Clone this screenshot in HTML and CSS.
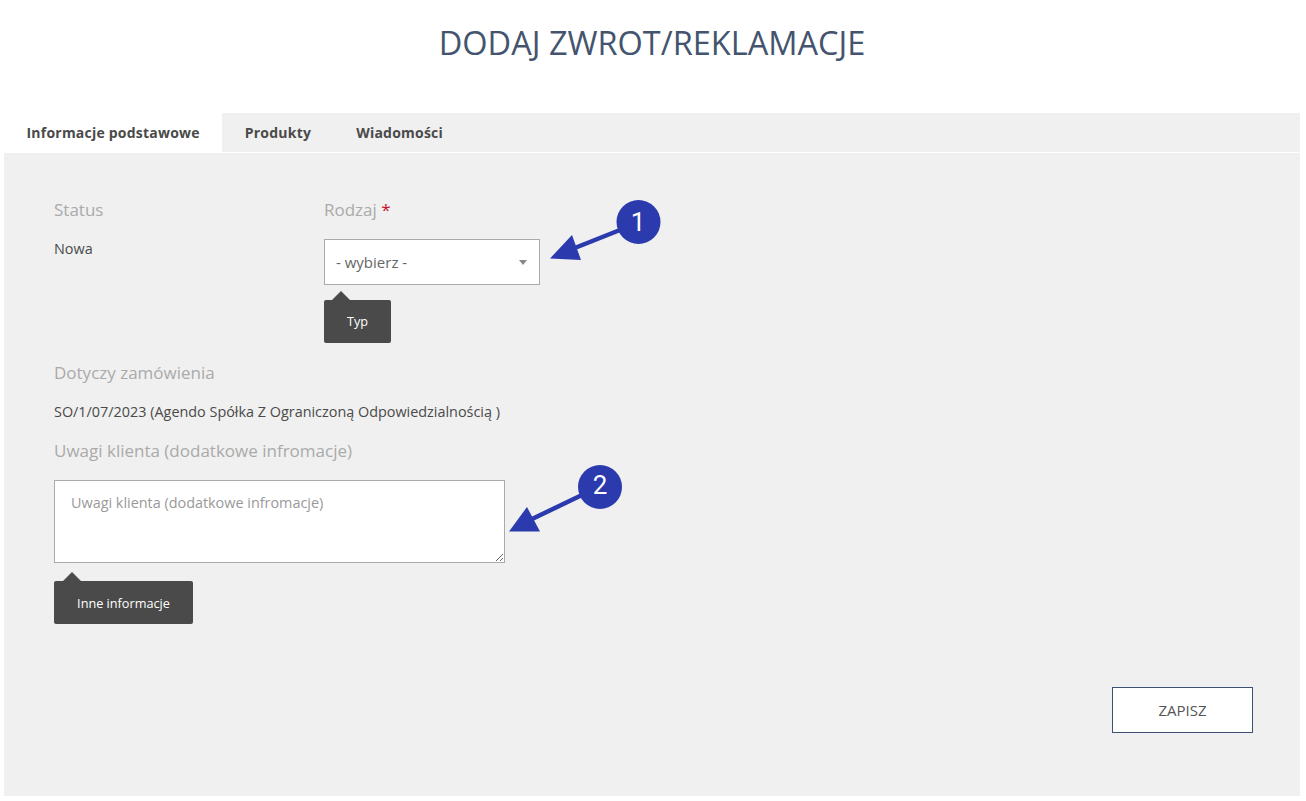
FILE: index.html
```html
<!DOCTYPE html>
<html lang="pl">
<head>
<meta charset="utf-8">
<title>Dodaj zwrot/reklamacje</title>
<link rel="stylesheet" href="styles.css">
</head>
<body>
<div class="page">
  <h1 class="title">DODAJ ZWROT/REKLAMACJE</h1>
  <div class="tabs">
    <a class="tab tab-active">Informacje podstawowe</a>
    <a class="tab">Produkty</a>
    <a class="tab">Wiadomości</a>
  </div>
  <div class="panel">
    <div class="row-top">
      <div class="col-status">
        <div class="label">Status</div>
        <div class="value value-status">Nowa</div>
      </div>
      <div class="col-type">
        <div class="label">Rodzaj <span class="req">*</span></div>
        <div class="select-wrap">
          <select class="select"><option>- wybierz -</option></select>
          <span class="caret"></span>
        </div>
        <div class="tip tip-type">Typ</div>
      </div>
    </div>
    <div class="label label-order">Dotyczy zamówienia</div>
    <div class="value value-order">SO/1/07/2023 (Agendo Spółka Z Ograniczoną Odpowiedzialnością )</div>
    <div class="label label-notes">Uwagi klienta (dodatkowe infromacje)</div>
    <textarea class="notes" placeholder="Uwagi klienta (dodatkowe infromacje)"></textarea>
    <div class="tip tip-notes">Inne informacje</div>
    <div class="actions"><button class="save">ZAPISZ</button></div>
  </div>
  <svg class="overlay" width="1306" height="801" viewBox="0 0 1306 801" aria-hidden="true">
    <g fill="#2b3bae">
      <path d="M576 247.500L620 230" stroke="#2b3bae" stroke-width="4.500"/>
      <path d="M550 258.500L572 235L581 260Z"/>
      <circle cx="638.500" cy="222" r="22"/>
      <path d="M530 520L582 495" stroke="#2b3bae" stroke-width="4.500"/>
      <path d="M509 531.500L527 507L540 531.500Z"/>
      <circle cx="600" cy="487" r="22"/>
    </g>
    <g fill="#fff" font-family="Roboto, sans-serif" font-size="26" font-weight="400" text-anchor="middle">
      <text x="638" y="231">1</text>
      <text x="600" y="494">2</text>
    </g>
  </svg>
</div>
</body>
</html>
```
FILE: styles.css
```css
* { box-sizing: border-box; }
html, body { margin: 0; padding: 0; background: #fff; }
body { font-family: "Open Sans", sans-serif; color: #4a4a4a; font-size: 14px; }
.page { position: relative; width: 1306px; height: 801px; padding: 0 6px 5px 4px; overflow: hidden; }
.title { margin: 0; height: 113px; padding-top: 21px; text-align: center; font-size: 32.500px; line-height: 44px; font-weight: 400; color: #44546f; }
.tabs { display: flex; height: 40px; background: #f0f0f0; border-bottom: 1px solid #fff; }
.tab { padding: 0 22.500px; line-height: 39px; font-size: 14px; letter-spacing: 0.220px; font-weight: 700; color: #4a4a4a; height: 39px; }
.tab-active { background: #fff; height: 40px; margin-bottom: -1px; }
.panel { background: #f0f0f0; height: 643px; padding: 44px 47px 0 50px; }
.row-top { display: flex; }
.col-status { width: 270px; }
.label { font-size: 17px; line-height: 26px; color: #aaa; }
.req { color: #c8102e; }
.value { font-size: 14.400px; line-height: 20px; color: #4a4a4a; }
.value-status { margin-top: 16px; }
.select-wrap { position: relative; width: 216px; height: 46px; margin-top: 16px; }
.select { appearance: none; display: block; width: 100%; height: 46px; padding: 0 11px; border: 1px solid #aaa; border-radius: 0; background: #fff; font: 400 15px "Open Sans", sans-serif; color: #666; outline: none; }
.caret { position: absolute; right: 13px; top: 21px; width: 0; height: 0; border-left: 4px solid transparent; border-right: 4px solid transparent; border-top: 5px solid #888; }
.tip { position: relative; width: fit-content; height: 43px; background: #4a4a4a; border-radius: 2px; color: #fff; font-size: 12.700px; line-height: 43px; }
.tip::before { content: ""; position: absolute; top: -9px; width: 0; height: 0; border-left: 9px solid transparent; border-right: 9px solid transparent; border-bottom: 9px solid #4a4a4a; }
.tip-type { width: 67px; margin-top: 15px; text-align: center; }
.tip-type::before { left: 8px; }
.tip-notes { width: 139px; margin-top: 18px; text-align: center; line-height: 45px; }
.tip-notes::before { left: 9px; }
.label-order { margin-top: 17px; }
.value-order { margin-top: 16px; }
.label-notes { margin-top: 16px; }
.notes { display: block; width: 451px; height: 83px; margin-top: 16px; padding: 12px 16px; border: 1px solid #aaa; border-radius: 0; background: #fff; font: 400 14.400px/20px "Open Sans", sans-serif; color: #4a4a4a; outline: none; }
.notes::placeholder { color: #999; opacity: 1; }
.actions { display: flex; justify-content: flex-end; margin-top: 63px; }
.save { width: 141px; height: 46px; border: 1px solid #3f5173; border-radius: 0; background: #fff; font: 400 15px "Open Sans", sans-serif; color: #555; padding: 0; }
.overlay { position: absolute; left: 0; top: 0; pointer-events: none; }
```
